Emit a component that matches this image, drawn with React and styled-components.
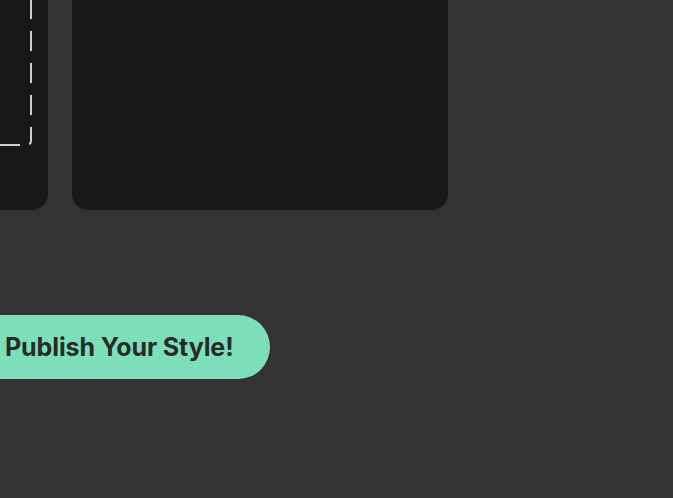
import styled, { createGlobalStyle } from 'styled-components';

const GlobalStyle = createGlobalStyle`
    html, body {
        margin: 0;
        padding: 0;
        background: #333333;
    }
    body {
        font-family: Inter, "Noto Sans", sans-serif;
    }
`;

const Page = styled.div`
    width: 100vw;
    height: 100vh;
    overflow: hidden;
    background: #333333;
`;

const Stage = styled.div`
    display: flex;
    flex-direction: column;
    align-items: flex-start;
    gap: 105px;
    margin: -190px 0 0 -328px;
`;

const CardRow = styled.div`
    display: flex;
    gap: 24px;
`;

const Card = styled.div`
    box-sizing: border-box;
    width: 376px;
    height: 400px;
    padding: 16px;
    background: #181818;
    border-radius: 16px;
`;

const DropZone = styled.div`
    position: relative;
    width: 344px;
    height: 320px;
    svg {
        position: absolute;
        inset: 0;
        width: 100%;
        height: 100%;
        overflow: visible;
    }
`;

const PublishButton = styled.button`
    margin-left: 288px;
    height: 64px;
    padding: 0 36px 0 45px;
    border: none;
    border-radius: 32px;
    background: #7ddfb8;
    color: #272b2a;
    font-family: Inter, "Noto Sans", sans-serif;
    font-size: 25px;
    font-weight: 700;
    letter-spacing: -0.1px;
    cursor: pointer;
`;

const App = () => {
    return (
        <Page>
            <GlobalStyle />
            <Stage>
                <CardRow>
                    <Card>
                        <DropZone>
                            <svg>
                                <path
                                    d="M343 0 V315 A3 3 0 0 1 341 318"
                                    fill="none"
                                    stroke="#cfcfcf"
                                    strokeWidth="2"
                                    strokeDasharray="20 12"
                                    strokeDashoffset="19"
                                />
                                <path
                                    d="M332 319 H0"
                                    fill="none"
                                    stroke="#cfcfcf"
                                    strokeWidth="2"
                                    strokeDasharray="20 12"
                                />
                            </svg>
                        </DropZone>
                    </Card>
                    <Card />
                </CardRow>
                <PublishButton>Publish Your Style!</PublishButton>
            </Stage>
        </Page>
    );
};

export default App;
